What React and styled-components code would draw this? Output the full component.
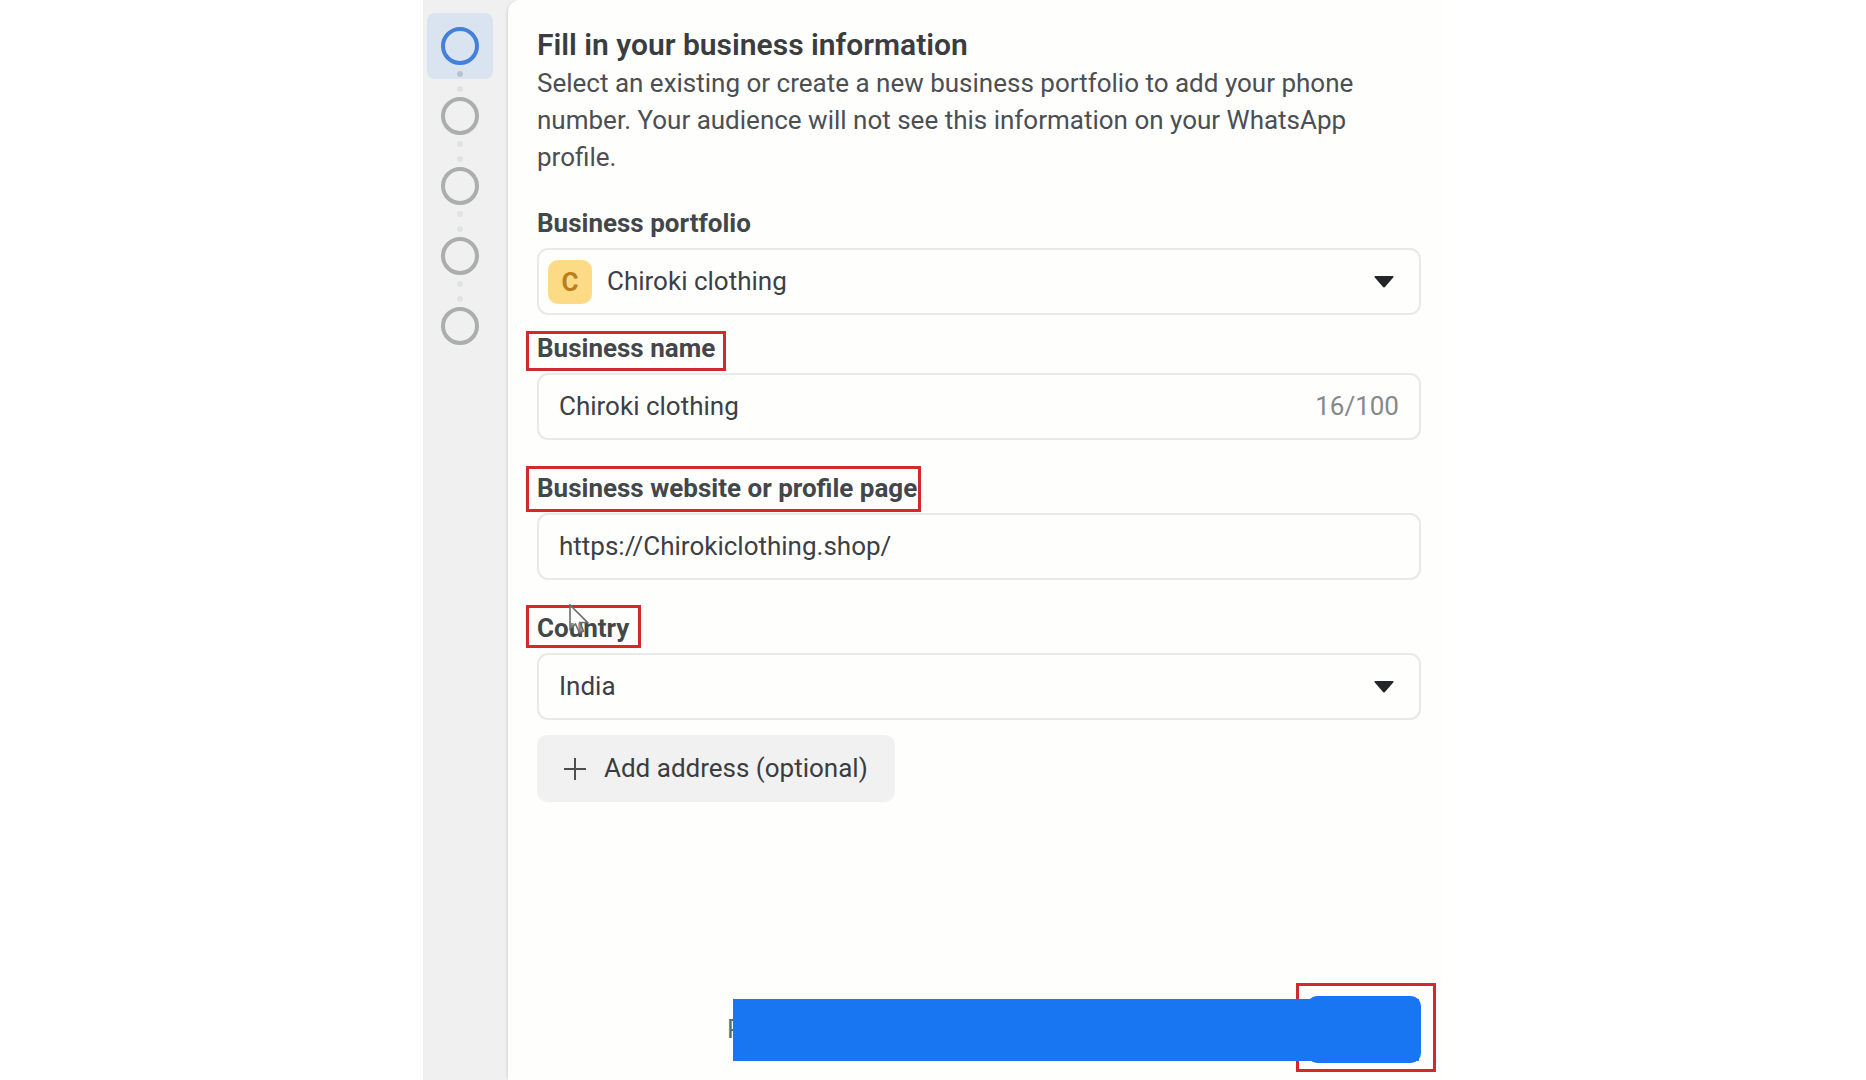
import { useState } from "react";
import { createGlobalStyle, styled } from "styled-components";

const GlobalStyle = createGlobalStyle`
  * {
    box-sizing: border-box;
  }

  body {
    margin: 0;
    background: #ffffff;
    color: #3a3d40;
    font-family: Roboto, "Liberation Sans", sans-serif;
    font-size: 26px;
    line-height: 37px;
  }
`;

const Page = styled.div`
  display: flex;
  max-width: 1020px;
  min-height: 100vh;
  margin: 0 auto;
  background: #f0f0f0;
`;

const Sidebar = styled.ol`
  display: flex;
  flex-direction: column;
  flex-shrink: 0;
  gap: 4px;
  width: 85px;
  margin: 0;
  padding: 13px 0 0 4px;
  list-style: none;
`;

const StepButton = styled.button`
  position: relative;
  display: flex;
  align-items: center;
  justify-content: center;
  width: 66px;
  height: 66px;
  padding: 0;
  border: none;
  border-radius: 8px;
  background: ${({ $active }) => ($active ? "#dae4f0" : "transparent")};
`;

const Ring = styled.span`
  width: 38px;
  height: 38px;
  border: 4px solid ${({ $active }) => ($active ? "#4480d8" : "#acaeae")};
  border-radius: 50%;
`;

const Dots = styled.span`
  position: absolute;
  top: 58px;
  left: 30px;
  z-index: 1;
  display: flex;
  flex-direction: column;
  gap: 9px;
`;

const Dot = styled.i`
  width: 6px;
  height: 6px;
  border-radius: 50%;
  background: ${({ $dark }) => ($dark ? "#b9c3ce" : "#e1e2e3")};
`;

const Panel = styled.main`
  display: flex;
  flex: 1;
  flex-direction: column;
  min-width: 0;
  padding: 26px 22px 17px 29px;
  border-top-left-radius: 12px;
  background: #fefefc;
  box-shadow: -3px 0 3px -2px #d4d4d4;
`;

const Title = styled.h1`
  margin: 0 0 2px;
  color: #3a3d40;
  font-size: 30px;
  font-weight: 600;
  line-height: 37px;
`;

const Description = styled.p`
  max-width: 840px;
  margin: 0 0 29px;
  color: #4b4f53;
`;

const Field = styled.div`
  display: flex;
  flex-direction: column;
  align-items: flex-start;
  gap: 6px;
  margin-bottom: ${({ $gap }) => $gap}px;
`;

const Label = styled.label`
  position: relative;
  color: #43474a;
  font-weight: 700;
`;

const Highlight = styled.span`
  position: absolute;
  inset: ${({ $inset }) => $inset};
  border: 3px solid #d02a2e;
  pointer-events: none;
`;

const Control = styled.div`
  display: flex;
  align-items: center;
  width: 100%;
  height: 67px;
  padding: 0 20px;
  border: 2px solid #e9e9e8;
  border-radius: 11px;

  &:focus-within {
    border-color: #1876f2;
  }
`;

const TextInput = styled.input`
  flex: 1;
  min-width: 0;
  padding: 0;
  border: none;
  outline: none;
  background: transparent;
  color: #3c4044;
  font: inherit;
`;

const Select = styled.select`
  flex: 1;
  min-width: 0;
  padding: 0;
  border: none;
  outline: none;
  appearance: none;
  background: transparent;
  color: #3c4044;
  font: inherit;
`;

const Counter = styled.span`
  color: #84898c;
`;

const Avatar = styled.span`
  width: 44px;
  height: 44px;
  margin: 0 15px 0 -11px;
  border-radius: 10px;
  background: #fddb86;
  color: #b8801c;
  font-size: 26px;
  font-weight: 700;
  line-height: 44px;
  text-align: center;
`;

const Arrow = styled.svg`
  flex-shrink: 0;
  width: 20px;
  height: 12px;
  margin-right: 5px;
  pointer-events: none;
`;

const AddButton = styled.button`
  display: flex;
  align-items: center;
  align-self: flex-start;
  gap: 18px;
  height: 67px;
  padding: 0 27px;
  border: none;
  border-radius: 10px;
  background: #f1f1f1;
  color: #3a3d40;
  font: inherit;
`;

const Pointer = styled.svg`
  position: absolute;
  top: -6px;
  left: 32px;
  width: 20px;
  height: 32px;
`;

const Footer = styled.footer`
  position: relative;
  display: flex;
  align-items: center;
  align-self: flex-end;
  justify-content: space-between;
  width: 694px;
  max-width: 100%;
  margin-top: auto;
`;

const PolicyLink = styled.a`
  color: #4f7288;
  text-decoration: none;
`;

const NextButton = styled.button`
  position: relative;
  width: 114px;
  height: 67px;
  border: none;
  border-radius: 10px;
  background: #1876f2;
`;

const CoverBar = styled.div`
  position: absolute;
  inset: 3px 2px 2px 6px;
  background: #1876f2;
`;

function DownArrow() {
  return (
    <Arrow viewBox="0 0 20 12" aria-hidden="true">
      <path
        d="M1.4 0H18.6Q20.2 .2 19.2 1.6L11.4 10.6Q10 12.4 8.6 10.6L.8 1.6Q-.2 .2 1.4 0Z"
        fill="#242526"
      />
    </Arrow>
  );
}

const steps = [1, 2, 3, 4, 5];

export default function App() {
  const [activeStep, setActiveStep] = useState(1);
  const [name, setName] = useState("Chiroki clothing");
  const [website, setWebsite] = useState("https://Chirokiclothing.shop/");

  return (
    <>
      <GlobalStyle />
      <Page>
        <Sidebar>
          {steps.map((step) => (
            <li key={step}>
              <StepButton
                type="button"
                aria-label={`Step ${step}`}
                $active={step === activeStep}
                onClick={() => setActiveStep(step)}
              >
                <Ring $active={step === activeStep} />
                {step < steps.length && (
                  <Dots>
                    <Dot $dark={step === activeStep} />
                    <Dot />
                  </Dots>
                )}
              </StepButton>
            </li>
          ))}
        </Sidebar>

        <Panel>
          <Title>Fill in your business information</Title>
          <Description>
            Select an existing or create a new business portfolio to add your
            phone number. Your audience will not see this information on your
            WhatsApp profile.
          </Description>

          <Field $gap={15}>
            <Label htmlFor="portfolio">Business portfolio</Label>
            <Control>
              <Avatar aria-hidden="true">C</Avatar>
              <Select id="portfolio">
                <option>Chiroki clothing</option>
              </Select>
              <DownArrow />
            </Control>
          </Field>

          <Field $gap={30}>
            <Label htmlFor="name">
              Business name
              <Highlight $inset="1px -11px -4px -11px" />
            </Label>
            <Control>
              <TextInput
                id="name"
                value={name}
                maxLength={100}
                onChange={(event) => setName(event.target.value)}
              />
              <Counter>{name.length}/100</Counter>
            </Control>
          </Field>

          <Field $gap={30}>
            <Label htmlFor="website">
              Business website or profile page
              <Highlight $inset="-4px -4px -5px -11px" />
            </Label>
            <Control>
              <TextInput
                id="website"
                value={website}
                onChange={(event) => setWebsite(event.target.value)}
              />
            </Control>
          </Field>

          <Field $gap={15}>
            <Label htmlFor="country">
              Country
              <Highlight $inset="-5px -12px -1px -11px" />
              <Pointer viewBox="0 0 20 32" aria-hidden="true">
                <path
                  d="M1 1V25L6.5 20L10.5 29L14.5 27L11 18.5H18.5Z"
                  fill="#ffffff"
                  fillOpacity="0.4"
                  stroke="#6a6c6e"
                  strokeWidth="1.6"
                />
              </Pointer>
            </Label>
            <Control>
              <Select id="country">
                <option>India</option>
              </Select>
              <DownArrow />
            </Control>
          </Field>

          <AddButton type="button">
            <svg width="22" height="22" viewBox="0 0 22 22" aria-hidden="true">
              <path d="M11 0V22M0 11H22" stroke="#4b4f52" strokeWidth="2" />
            </svg>
            Add address (optional)
          </AddButton>

          <Footer>
            <PolicyLink href="#">P</PolicyLink>
            <NextButton type="button" aria-label="Next">
              <Highlight $inset="-13px -15px -9px -11px" />
            </NextButton>
            <CoverBar />
          </Footer>
        </Panel>
      </Page>
    </>
  );
}
